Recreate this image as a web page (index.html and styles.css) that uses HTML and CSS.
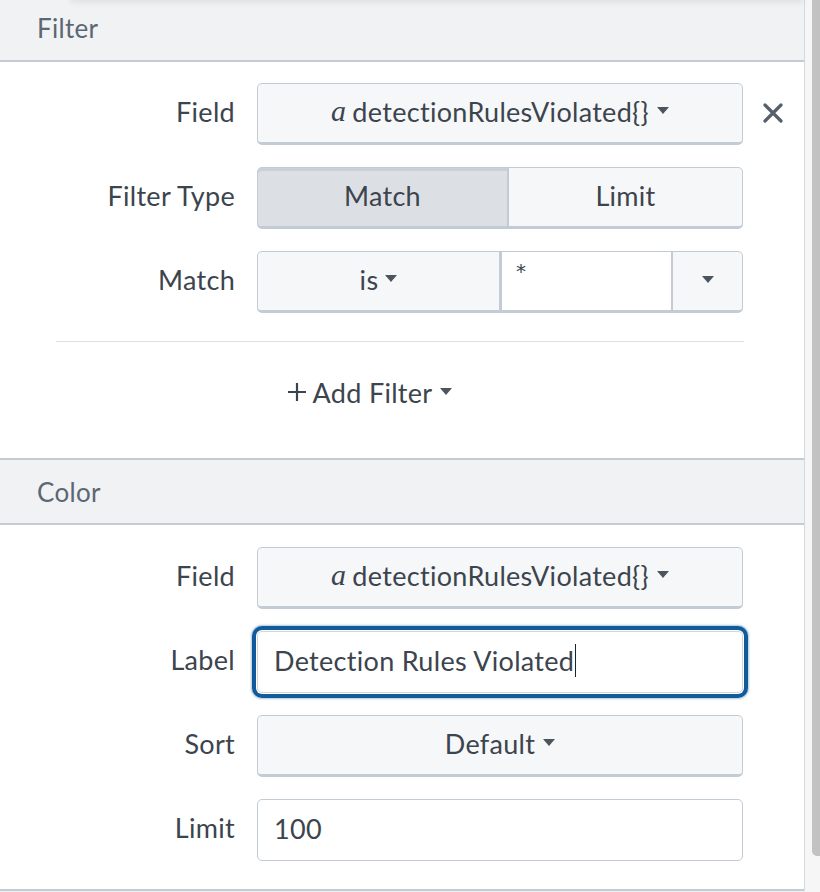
FILE: index.html
```html
<!DOCTYPE html>
<html>
<head>
<meta charset="utf-8">
<link rel="stylesheet" href="styles.css">
</head>
<body>
<div class="window">
  <div class="panel">
    <section class="section">
      <div class="section-head first">Filter</div>
      <div class="section-body filter-body">
        <div class="row">
          <div class="label">Field</div>
          <button class="btn"><span class="type">a</span> detectionRulesViolated{} <svg class="caret" viewBox="0 0 12 8"><path d="M0 0h12L6 7z"/></svg></button>
          <button class="close" aria-label="Remove"><svg viewBox="0 0 20 20"><path d="M2 2L18 18M18 2L2 18"/></svg></button>
        </div>
        <div class="row">
          <div class="label">Filter Type</div>
          <div class="seg">
            <button class="seg-btn active">Match</button>
            <button class="seg-btn">Limit</button>
          </div>
        </div>
        <div class="row">
          <div class="label">Match</div>
          <div class="combo">
            <button class="combo-op">is <svg class="caret" viewBox="0 0 12 8"><path d="M0 0h12L6 7z"/></svg></button>
            <div class="combo-text">*</div>
            <button class="combo-drop"><svg class="caret" viewBox="0 0 12 8"><path d="M0 0h12L6 7z"/></svg></button>
          </div>
        </div>
        <div class="divider"></div>
        <div class="add-row">
          <button class="add-btn"><svg class="plus" viewBox="0 0 20 20"><path d="M10 1v18M1 10h18"/></svg>Add Filter <svg class="caret" viewBox="0 0 12 8"><path d="M0 0h12L6 7z"/></svg></button>
        </div>
      </div>
    </section>
    <section class="section">
      <div class="section-head second">Color</div>
      <div class="section-body color-body">
        <div class="row">
          <div class="label">Field</div>
          <button class="btn"><span class="type">a</span> detectionRulesViolated{} <svg class="caret" viewBox="0 0 12 8"><path d="M0 0h12L6 7z"/></svg></button>
        </div>
        <div class="row">
          <div class="label">Label</div>
          <div class="input focused"><span class="cursor">Detection Rules Violated</span></div>
        </div>
        <div class="row">
          <div class="label">Sort</div>
          <button class="btn">Default <svg class="caret" viewBox="0 0 12 8"><path d="M0 0h12L6 7z"/></svg></button>
        </div>
        <div class="row">
          <div class="label">Limit</div>
          <div class="input">100</div>
        </div>
      </div>
    </section>
  </div>
  <div class="scrollbar"><div class="thumb"></div></div>
</div>
</body>
</html>
```
FILE: styles.css
```css
* { box-sizing: border-box; }
html, body { margin: 0; padding: 0; }
body {
  width: 820px;
  height: 892px;
  overflow: hidden;
  background: #eef0f2;
  font-family: Lato, "Open Sans", sans-serif;
  color: #3c444d;
  letter-spacing: 0.3px;
}
button {
  font-family: inherit;
  color: inherit;
  letter-spacing: inherit;
  margin: 0;
}
.window {
  display: flex;
  height: 892px;
  overflow: hidden;
}
.panel {
  position: relative;
  width: 805px;
  flex: none;
  background: #fff;
  border-right: 1px solid #d5dae0;
  align-self: flex-start;
}
.panel::before {
  content: "";
  position: absolute;
  top: -12px;
  left: 70px;
  right: 0;
  height: 12px;
  box-shadow: 0 3px 6px rgba(0, 0, 0, 0.07);
  z-index: 2;
}
.section-head {
  height: 67px;
  display: flex;
  align-items: center;
  padding-left: 37px;
  font-size: 26px;
  color: #5c6773;
  background: #f1f2f4;
  border-bottom: 2px solid #c3cbd4;
}
.section-head.first {
  margin-top: -5px;
}
.section-head.second {
  border-top: 2px solid #c3cbd4;
}
.section-body {
  padding-top: 21px;
  display: flex;
  flex-direction: column;
  gap: 22px;
}
.filter-body { padding-bottom: 34px; }
.color-body { padding-top: 22px; padding-bottom: 28px; border-bottom: 2px solid #c3cbd4; }
.row {
  display: grid;
  grid-template-columns: 235px 486px 62px;
  column-gap: 22px;
  align-items: center;
  height: 62px;
}
.label {
  text-align: right;
  font-size: 27px;
  color: #3c444d;
  padding-bottom: 5px;
}
.btn {
  height: 62px;
  width: 486px;
  border: 1px solid #c3cbd4;
  border-bottom-width: 3px;
  border-radius: 5px;
  background: #f6f7f9;
  font-size: 27px;
  display: flex;
  align-items: center;
  justify-content: center;
  gap: 8px;
  padding: 0 0 4px;
}
.type {
  font-family: "Liberation Serif", serif;
  font-style: italic;
  font-size: 30px;
  margin-right: -2px;
}
.caret {
  width: 12px;
  height: 8px;
  fill: #4c555e;
  flex: none;
}
.close {
  width: 22px;
  height: 22px;
  padding: 0;
  border: 0;
  background: none;
  justify-self: start;
  margin-left: -2px;
  margin-bottom: 2px;
}
.close svg {
  display: block;
  width: 20px;
  height: 20px;
  stroke: #56606b;
  stroke-width: 3.2;
  stroke-linecap: round;
}
.seg {
  display: flex;
  width: 486px;
  height: 62px;
}
.seg-btn {
  flex: 1;
  height: 62px;
  border: 1px solid #c3cbd4;
  border-bottom-width: 3px;
  background: #f6f7f9;
  font-size: 27px;
  padding: 0 0 4px;
}
.seg-btn:first-child {
  border-radius: 5px 0 0 5px;
  border-right-width: 2px;
  flex: 0 0 252px;
}
.seg-btn:last-child {
  border-radius: 0 5px 5px 0;
  border-left: 0;
}
.seg-btn.active {
  background: #dce0e5;
  box-shadow: inset 0 3px 0 #c9d0d8;
  color: #3c444d;
}
.combo {
  display: flex;
  width: 486px;
  height: 62px;
}
.combo-op {
  width: 243px;
  height: 62px;
  border: 1px solid #c3cbd4;
  border-bottom-width: 3px;
  border-radius: 5px 0 0 5px;
  background: #f6f7f9;
  font-size: 27px;
  display: flex;
  align-items: center;
  justify-content: center;
  gap: 7px;
  padding: 0 0 4px;
}
.combo-text {
  width: 171px;
  height: 62px;
  border-top: 1px solid #c3cbd4;
  border-bottom: 3px solid #c3cbd4;
  border-left: 2px solid #c3cbd4;
  background: #fff;
  font-family: "DejaVu Sans", sans-serif;
  font-size: 20px;
  line-height: 1;
  padding: 9px 0 0 14px;
  color: #3c444d;
}
.combo-drop {
  width: 72px;
  height: 62px;
  border: 1px solid #c3cbd4;
  border-left-width: 2px;
  border-bottom-width: 3px;
  border-radius: 0 5px 5px 0;
  background: #f6f7f9;
  display: flex;
  align-items: center;
  justify-content: center;
  padding: 0 0 2px;
}
.divider {
  margin: 6px 60px 0 56px;
  width: 688px;
  height: 1px;
  background: #dce0e5;
}
.add-row {
  display: flex;
  justify-content: center;
  padding-right: 65px;
  height: 62px;
  margin-top: -2px;
}
.add-btn {
  border: 0;
  background: none;
  font-size: 27px;
  display: flex;
  align-items: center;
  gap: 8px;
  padding: 0 0 2px;
}
.plus {
  width: 20px;
  height: 20px;
  stroke: #3c444d;
  stroke-width: 2.2;
  margin-right: -2px;
}
.input {
  width: 486px;
  height: 62px;
  border: 1px solid #c3cbd4;
  border-radius: 5px;
  background: #fff;
  font-size: 27px;
  display: flex;
  align-items: center;
  padding: 0 0 3px 16px;
  color: #3c444d;
}
.input.focused {
  border-color: #d0d6dc;
  box-shadow: 0 0 0 1px #ffffff, 0 0 0 5px #125b9b, 0 0 2px 6px rgba(18, 91, 155, 0.35);
}
.cursor {
  border-right: 1.5px solid #1d232a;
  padding-right: 1px;
}
.scrollbar {
  flex: 1;
  background: #f6f6f6;
  padding-left: 7px;
}
.thumb {
  height: 856px;
  background: #c2c2c2;
  border-radius: 0 0 0 5px;
}
```
